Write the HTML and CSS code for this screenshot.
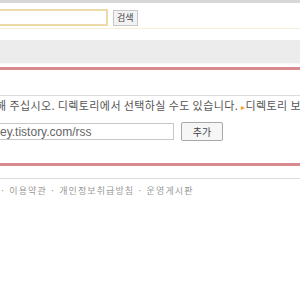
FILE: index.html
```html
<!DOCTYPE html>
<html>
<head>
  <title>RSS 추가</title>
  <link rel="stylesheet" href="styles.css">
</head>
<body>
  <div class="topbar"></div>

  <!-- 검색 -->
  <div class="search">
    <input type="text" class="search-input" value="">
    <button class="btn">검색</button>
  </div>

  <div class="tabline"></div>
  <div class="tabs"></div>

  <!-- RSS 추가 -->
  <div class="box">
    <p class="guide">해 주십시오. 디렉토리에서 선택하실 수도 있습니다. <span class="arrow">▸</span><a href="#">디렉토리 보기</a></p>
    <div class="add-row">
      <input type="text" class="rss-input" value="ey.tistory.com/rss">
      <button class="btn btn-add">추가</button>
    </div>
  </div>

  <div class="footer">
    <span>· 이용약관</span> <span>· 개인정보취급방침</span> <span>· 운영게시판</span>
  </div>
</body>
</html>
```

FILE: styles.css
```css
body {
  font-family: "Noto Sans CJK KR", "Noto Sans", sans-serif;
  font-size: 10px;
  margin: 0;
  padding: 0;
  background-color: #fff;
  color: #555;
  overflow: hidden;
}

.topbar {
  height: 3px;
  background-color: #d8d8d8;
}

.search {
  display: flex;
  align-items: center;
  gap: 5px;
  margin-top: 6px;
  margin-left: -20px;
}

.search-input {
  width: 124px;
  height: 13px;
  border: 2px solid #eadba8;
  padding: 0;
  box-sizing: content-box;
}

.btn {
  font-family: inherit;
  font-size: 9px;
  color: #444;
  background-color: #f2f2f2;
  border: 1px solid #c8c8c8;
  padding: 0 3px;
  height: 16px;
  line-height: 14px;
  cursor: pointer;
}

.tabline {
  margin-top: 2px;
  height: 1px;
  background-color: #f6f0d8;
}

.tabs {
  margin-top: 11px;
  height: 23px;
  background-color: #ececec;
  border-bottom: 1px solid #f8f8f8;
}

.box {
  margin-top: 3px;
  border-top: 3px solid #d98a8e;
  border-bottom: 3px solid #d98a8e;
  padding: 25px 0 22px;
}

.guide {
  margin: 0;
  padding-top: 2px;
  border-top: 1px solid #dcdcdc;
  white-space: nowrap;
  margin-left: -4px;
  line-height: 14px;
  font-size: 11px;
  letter-spacing: 0.4px;
}

.arrow {
  color: #f0a020;
  font-size: 8px;
}

.guide a {
  color: #555;
  text-decoration: none;
}

.add-row {
  display: flex;
  align-items: center;
  gap: 7px;
  margin-top: 8px;
  margin-left: -4px;
}

.rss-input {
  width: 170px;
  height: 15px;
  border: 1px solid #c8c8c8;
  padding: 0 3px;
  font-family: "Liberation Sans", sans-serif;
  font-size: 12px;
  color: #666;
}

.btn-add {
  width: 42px;
  height: 19px;
  font-size: 10px;
  border-color: #a8a8a8;
  background-color: #f6f6f6;
  border-radius: 2px;
}

.footer {
  margin-top: 12px;
  border-top: 1px solid #dcdcdc;
  padding-top: 5px;
  color: #999;
  font-size: 9px;
  letter-spacing: 1.1px;
  white-space: nowrap;
}
```
